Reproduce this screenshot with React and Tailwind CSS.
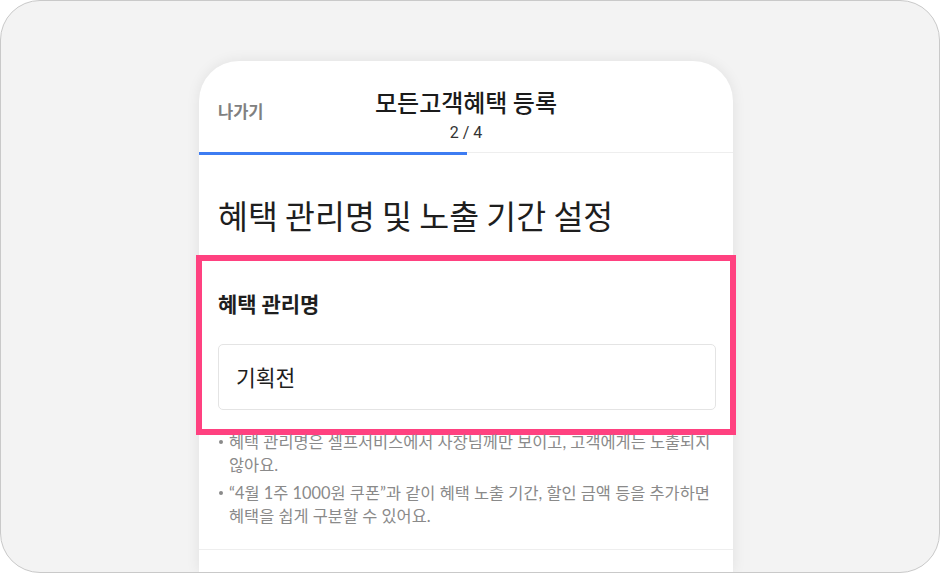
import React from 'react';

const KR = { fontFamily: '"Noto Sans CJK KR", "Noto Sans", sans-serif' };
const LATO_KR = { fontFamily: 'Lato, "Noto Sans CJK KR", sans-serif' };

const tips = [
  ['혜택 관리명은 셀프서비스에서 사장님께만 보이고, 고객에게는 노출되지', '않아요.'],
  ['“4월 1주 1000원 쿠폰”과 같이 혜택 노출 기간, 할인 금액 등을 추가하면', '혜택을 쉽게 구분할 수 있어요.'],
];

const App = () => {
  return (
    <div className="w-[940px] h-[574px] bg-white" style={KR}>
      <div className="h-[573px] flex flex-col overflow-hidden rounded-[40px] border border-[#c9c9c9] bg-[#f3f3f3] pt-[60px] pl-[198px]">
        <div className="w-[534px] flex-1 bg-white rounded-t-[40px] shadow-[0_0_14px_rgba(0,0,0,0.08)]">
          {/* Header */}
          <div className="grid grid-cols-[1fr_auto_1fr] pt-[27px] pb-[9px]">
            <div className="pl-[19px] pt-[13px] text-[16.5px] leading-[20px] font-semibold text-[#808080]">
              나가기
            </div>
            <div className="flex flex-col items-center">
              <div className="text-[24px] leading-[28px] font-medium text-[#1b1b1b]">모든고객혜택 등록</div>
              <div className="mt-[7px] text-[16px] leading-[20px] text-[#333]" style={{ fontFamily: 'Roboto, sans-serif' }}>
                2 / 4
              </div>
            </div>
            <div />
          </div>

          {/* Progress */}
          <div className="flex h-[3px]">
            <div className="w-[268px] bg-[#3d7cf2]" />
            <div className="flex-1 border-t border-[#eeeeee]" />
          </div>

          {/* Title */}
          <h1 className="px-[19px] pt-[40px] text-[32.5px] leading-[40px] font-normal text-[#1e1e1e]">
            혜택 관리명 및 노출 기간 설정
          </h1>

          {/* Highlighted field */}
          <div className="mx-[-3px] mt-[20px] border-[6px] border-[#ff4180] pl-[16px] pr-[14px] pt-[29px] pb-[19px]">
            <div className="text-[21px] leading-[26px] font-semibold text-[#1e1e1e]">혜택 관리명</div>
            <div className="mt-[28px] h-[66px] flex items-center rounded-[5px] border border-[#e4e4e4] px-[17px]">
              <span className="text-[21.5px] text-[#1e1e1e]">기획전</span>
            </div>
          </div>

          {/* Tips */}
          <ul className="mt-[-5px] pl-[20px] pr-[12px] pb-[22px] border-b border-[#eeeeee] flex flex-col gap-[5px]" style={LATO_KR}>
            {tips.map(([first, second], i) => (
              <li key={i} className="flex text-[16.4px] leading-[23px] text-[#8a8a8a]">
                <span className="mt-[10px] mr-[6px] h-[4px] w-[4px] shrink-0 rounded-full bg-[#8a8a8a]" />
                <span className="whitespace-nowrap">
                  {first}
                  <br />
                  {second}
                </span>
              </li>
            ))}
          </ul>
        </div>
      </div>
    </div>
  );
};

export default App;
